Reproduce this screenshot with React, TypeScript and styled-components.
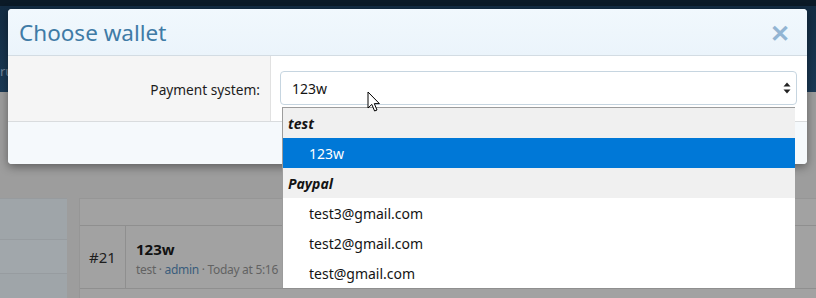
import styled, { createGlobalStyle } from 'styled-components';

const GlobalStyle = createGlobalStyle`
  html, body {
    margin: 0;
    padding: 0;
  }
  body {
    font-family: 'Noto Sans', 'Open Sans', sans-serif;
    background: #9d9d9d;
  }
`;

const Screen = styled.div`
  position: relative;
  width: 816px;
  height: 298px;
  overflow: hidden;
  background: #9d9d9d;
`;

// page behind the modal (already dimmed)
const TopBar = styled.div`
  height: 92px;
  background: linear-gradient(#0b1a27 0, #0b1a27 6px, #132c43 6px, #1b3a56 92px);
  display: flex;
  align-items: flex-end;
  padding-bottom: 12px;
  box-sizing: border-box;
`;
const NavText = styled.span`
  font-size: 13px;
  color: #6f8499;
`;
const Content = styled.div`
  display: flex;
  gap: 12px;
  padding-top: 106px;
`;
const Sidebar = styled.div`
  width: 67px;
  height: 110px;
  background: #9fa5a9;
  border-top: 1px solid #979b9e;
  display: flex;
  flex-direction: column;
`;
const SideBlock = styled.div<{ $h: number; $bg: string }>`
  height: ${({ $h }) => $h}px;
  background: ${({ $bg }) => $bg};
  border-bottom: 1px solid #979ca0;
`;
const MainPanel = styled.div`
  flex: 1;
  background: #a2a2a2;
  border: 1px solid #969696;
  border-right: none;
`;
const PanelHead = styled.div`
  height: 26px;
  border-bottom: 1px solid #8f8f8f;
`;
const ThreadRow = styled.div`
  display: flex;
  height: 62px;
  border-bottom: 1px solid #8f8f8f;
`;
const NumCell = styled.div`
  width: 45px;
  border-right: 1px solid #8f8f8f;
  display: flex;
  align-items: center;
  justify-content: center;
  font-size: 15px;
  color: #1e1e1e;
`;
const ThreadInfo = styled.div`
  padding: 13px 0 0 10px;
  display: flex;
  flex-direction: column;
  gap: 2px;
`;
const ThreadTitle = styled.div`
  font-size: 15px;
  font-weight: 700;
  color: #111;
`;
const ThreadMeta = styled.div`
  font-size: 12px;
  letter-spacing: -0.3px;
  color: #626262;
  white-space: nowrap;
`;
const MetaLink = styled.span`
  color: #3a5d7c;
`;

// modal
const Modal = styled.div`
  position: absolute;
  top: 9px;
  left: 8px;
  width: 799px;
  border-radius: 4px;
  overflow: hidden;
  background: #f5f9fc;
  box-shadow: 0 3px 10px rgba(0, 0, 0, 0.4);
`;
const ModalHeader = styled.div`
  height: 47px;
  display: flex;
  align-items: center;
  justify-content: space-between;
  padding: 1px 17px 0 11px;
  box-sizing: border-box;
  background: linear-gradient(#f1f8fd, #ebf4fb);
  border-bottom: 1px solid #d3dce3;
`;
const ModalTitle = styled.h2`
  margin: 0;
  font-size: 22.5px;
  font-weight: 400;
  color: #3f7ba6;
`;
const CloseButton = styled.span`
  font-size: 24px;
  line-height: 1;
  color: #93b5d3;
  font-weight: 700;
`;
const FormRow = styled.div`
  display: flex;
  height: 65px;
  border-bottom: 1px solid #d9dcde;
  background: #fff;
`;
const LabelCol = styled.div`
  width: 263px;
  background: #f5f5f5;
  border-right: 1px solid #e1e1e1;
  display: flex;
  align-items: center;
  justify-content: flex-end;
  padding: 2px 10px 0 0;
  box-sizing: border-box;
  font-size: 13.7px;
  color: #1c1c1c;
`;
const InputCol = styled.div`
  flex: 1;
  padding: 15px 10px 0 9px;
`;
const SelectBox = styled.div`
  height: 34px;
  border: 1px solid #c6d5e0;
  border-radius: 4px;
  display: flex;
  align-items: center;
  justify-content: space-between;
  padding: 0 5px 0 11px;
  box-sizing: border-box;
  font-size: 14px;
  color: #141414;
`;
const ModalFooter = styled.div`
  height: 42px;
  background: #f5f9fc;
`;

// native select popup
const Dropdown = styled.div`
  position: absolute;
  left: 282px;
  top: 107px;
  width: 513px;
  background: #fff;
  border-top: 1px solid #9c9c9c;
  border-left: 1px solid #9c9c9c;
  box-sizing: border-box;
`;
const Option = styled.div<{ $group?: boolean; $selected?: boolean }>`
  height: 30px;
  display: flex;
  align-items: center;
  padding-left: ${({ $group }) => ($group ? 5 : 26)}px;
  font-size: 14px;
  font-weight: ${({ $group }) => ($group ? 700 : 400)};
  font-style: ${({ $group }) => ($group ? 'italic' : 'normal')};
  background: ${({ $group, $selected }) =>
    $selected ? '#0078d7' : $group ? '#f0f0f0' : '#fff'};
  color: ${({ $selected }) => ($selected ? '#fff' : '#141414')};
`;
const Cursor = styled.svg`
  position: absolute;
  left: 367px;
  top: 91px;
`;

const options = [
  { label: 'test', group: true },
  { label: '123w', selected: true },
  { label: 'Paypal', group: true },
  { label: 'test3@gmail.com' },
  { label: 'test2@gmail.com' },
  { label: 'test@gmail.com' },
];

export default function App() {
  return (
    <Screen>
      <GlobalStyle />
      <TopBar>
        <NavText>ru</NavText>
      </TopBar>
      <Content>
        <Sidebar>
          <SideBlock $h={40} $bg="#9fa5a9" />
          <SideBlock $h={33} $bg="#a1a7ab" />
        </Sidebar>
        <MainPanel>
          <PanelHead />
          <ThreadRow>
            <NumCell>#21</NumCell>
            <ThreadInfo>
              <ThreadTitle>123w</ThreadTitle>
              <ThreadMeta>
                test · <MetaLink>admin</MetaLink> · Today at 5:16
              </ThreadMeta>
            </ThreadInfo>
          </ThreadRow>
        </MainPanel>
      </Content>

      <Modal>
        <ModalHeader>
          <ModalTitle>Choose wallet</ModalTitle>
          <CloseButton>✕</CloseButton>
        </ModalHeader>
        <FormRow>
          <LabelCol>Payment system:</LabelCol>
          <InputCol>
            <SelectBox>
              123w
              <svg width="8" height="12" viewBox="0 0 8 12">
                <path d="M4 0.5 L7.5 4.5 H0.5 Z M4 11.5 L7.5 7.5 H0.5 Z" fill="#222" />
              </svg>
            </SelectBox>
          </InputCol>
        </FormRow>
        <ModalFooter />
      </Modal>

      <Dropdown>
        {options.map((o) => (
          <Option key={o.label} $group={o.group} $selected={o.selected}>
            {o.label}
          </Option>
        ))}
      </Dropdown>

      <Cursor width="14" height="22" viewBox="0 0 14 22">
        <path
          d="M1 1 L1 17 L4.8 13.4 L7.6 20 L10 19 L7.3 12.6 L12.4 12.6 Z"
          fill="#fff"
          stroke="#000"
          strokeWidth="1"
          strokeLinejoin="round"
        />
      </Cursor>
    </Screen>
  );
}
